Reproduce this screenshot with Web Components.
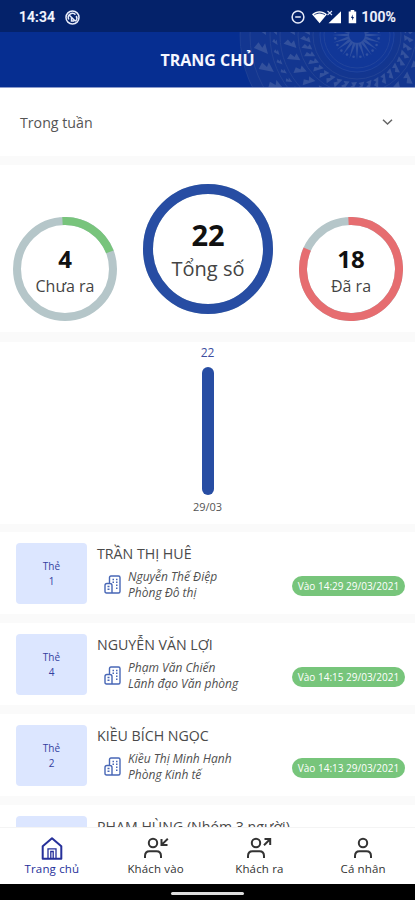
<!DOCTYPE html>
<html lang="vi">
<head>
<meta charset="utf-8">
<title>Trang chủ</title>
<style>
html,body{margin:0;padding:0}
body{width:415px;height:900px;overflow:hidden;background:#fafafa;font-family:"Open Sans","Noto Sans",sans-serif;color:#444}
</style>
</head>
<body>
<visitor-app></visitor-app>
<script>
const define = (name, render) => customElements.define(name, class extends HTMLElement {
  connectedCallback() {
    if (this.shadowRoot) return;
    const t = document.createElement('template');
    t.innerHTML = render(this);
    this.attachShadow({mode: 'open'}).append(t.content.cloneNode(true));
  }
});
const attr = (el, n) => el.getAttribute(n) || '';

define('status-bar', () => `
<style>
:host{display:flex;height:32px;background:#04226a;color:#f4f6ff;font:500 14px/32px Roboto,sans-serif;align-items:center;box-sizing:border-box;padding:2px 19px 0 19px}
.l{letter-spacing:.1px;-webkit-text-stroke:.2px}
svg{display:block}
.sp{flex:1}
</style>
<span class="l">14:34</span>
<svg style="margin-left:10px" width="15" height="15" viewBox="0 0 15 15" fill="none" stroke="#e8ecfa" stroke-width="1.5"><circle cx="7.5" cy="7.5" r="6.500"/><path d="M3.800 9.500A4.200 4.200 0 0 1 10.500 4.600M4.600 5.500L10.500 11.200M11.200 6a4 4 0 0 1-.6 5M6.500 7.500v3.600h2.500"/></svg>
<span class="sp"></span>
<svg width="14" height="14" viewBox="0 0 14 14" fill="none" stroke="#e8ecfa" stroke-width="1.5"><circle cx="7" cy="7" r="5.900"/><path d="M4.200 7h5.600"/></svg>
<svg style="margin-left:7px" width="30" height="15" viewBox="0 0 30 15" fill="#fff"><path d="M0 4.200C4.500 .300 10.500 .300 15 4.200L7.600 13.200z"/><path d="M2.300 4.800C5.500 2.600 9.500 2.600 12.900 4.800" fill="none" stroke="#04226a" stroke-width=".9"/><path d="M16.500 13.300H29V1.200z"/><path d="M15.500 1l4.500 4M20 1l-4.500 4" stroke="#dfe5f8" stroke-width="1.100"/></svg>
<svg style="margin:0 4px 0 6px" width="9" height="14" viewBox="0 0 9 14"><path d="M2.700 0h3.600v1.500H8.200V13.300H.700V1.500h2z" fill="#fff"/><path d="M4.700 4.500L3 8h1.200v2.500L6 7H4.700z" fill="#04226a"/></svg>
<span class="l">100%</span>`);

define('title-bar', () => {
  const polar = (r, a) => `${(118 + r * Math.cos(a)).toFixed(1)} ${(3 + r * Math.sin(a)).toFixed(1)}`;
  let d = '';
  // radial ornament: central star, tick rings and bird-like bands
  for (let i = 0; i < 20; i++) {
    const a = i * Math.PI / 10, [x, y] = polar(22, a + .157).split(' ');
    d += `<path d="M${polar(8, a - .2)}L${polar(25, a)}L${polar(8, a + .2)}z"/><circle cx="${x}" cy="${y}" r="1.300"/>`;
  }
  const band = (n, r, w, h) => {
    for (let i = 0; i < n; i++) {
      const a = i * 2 * Math.PI / n;
      d += `<path d="M${polar(r, a)}L${polar(r + h, a + w)}L${polar(r + h * .6, a + w * 1.6)}L${polar(r + h * .35, a + w * .9)}L${polar(r + h * .1, a + w * 1.400)}z"/>`;
    }
  };
  band(40, 47, .09, 10); band(30, 62, .09, 12); band(50, 80, .05, 5); band(30, 91, .085, 13);
  const rings = [33, 37, 44, 59, 77, 87, 107, 117].map(r => `<circle cx="118" cy="3" r="${r}"/>`).join('');
  return `
<style>
:host{display:grid;grid-template-columns:1fr;height:56px;background:#062e91;border-bottom:1px solid #8b9bcb;box-sizing:border-box;overflow:hidden}
svg,h1{grid-area:1/1}
svg{justify-self:end;display:block}
h1{margin:0;text-align:center;align-self:center;font-size:16px;line-height:20px;font-weight:700;color:#f5f7ff;z-index:1}
</style>
<svg width="176" height="55" viewBox="0 0 176 55"><circle cx="118" cy="3" r="117" fill="#56658f" opacity=".16"/><circle cx="118" cy="3" r="38" fill="#0c3cb0" opacity=".25"/><g fill="#7186b6" opacity=".34">${d}</g><g fill="none" stroke="#6c7fae" stroke-width="1" opacity=".18">${rings}</g></svg>
<h1><slot></slot></h1>`;
});

define('period-select', () => `
<style>
:host{display:flex;height:68px;background:#fff;align-items:center;justify-content:space-between;padding:0 22px 0 20px;box-sizing:border-box;font-size:14.200px;color:#555}
svg{display:block}
</style>
<span><slot></slot></span>
<svg width="11" height="8" viewBox="0 0 11 8" fill="none" stroke="#666" stroke-width="1.500"><path d="M1 1.700l4.500 4.300L10 1.700"/></svg>`);

define('stat-ring', el => {
  const s = +attr(el, 'size'), w = +attr(el, 'stroke'), r = (s - w) / 2, c = s / 2, L = 2 * Math.PI * r;
  const f = +attr(el, 'part');
  return `
<style>
:host{display:grid;width:${s}px;height:${s}px}
svg,div{grid-area:1/1}
div{display:flex;flex-direction:column;align-items:center;justify-content:center;z-index:1;white-space:nowrap;padding-top:3px}
b{font-weight:700;color:#111;font-size:${attr(el, 'num')}px;line-height:1.250}
span{color:#444;font-size:${attr(el, 'text')}px;line-height:1.500}
</style>
<svg width="${s}" height="${s}" fill="none" stroke-width="${w}"><circle cx="${c}" cy="${c}" r="${r}" stroke="#b5c6c9"/><circle cx="${c}" cy="${c}" r="${r}" stroke="${attr(el, 'color')}" stroke-dasharray="${L * f} ${L}" transform="rotate(${attr(el, 'from') || -90} ${c} ${c})"/></svg>
<div><b>${attr(el, 'value')}</b><span><slot></slot></span></div>`;
});

define('stat-row', () => `
<style>
:host{display:flex;height:167px;background:#fff;box-sizing:border-box;padding:19px 12px 0 13px;justify-content:space-between;align-items:flex-start}
::slotted([small]){margin-top:33px}
</style><slot></slot>`);

define('day-chart', () => `
<style>
:host{display:flex;flex-direction:column;align-items:center;height:182px;background:#fff;box-sizing:border-box;padding-top:3px}
b{font-size:12px;line-height:15px;font-weight:500;color:#3d4ea0}
i{width:12px;height:128px;border-radius:6px;background:#274da3;margin:7px 0 4px}
span{font-size:11px;line-height:15px;color:#555}
</style><b>22</b><i></i><span>29/03</span>`);

define('visit-card', el => `
<style>
:host{display:flex;height:82px;background:#fff;box-sizing:border-box;padding:11px 10px 0 16px}
.tile{width:71px;height:61px;border-radius:4px;background:#dce6ff;color:#3440a0;font-size:10px;line-height:14.500px;text-align:center;display:flex;flex-direction:column;justify-content:center;font-weight:500;flex:none}
.body{margin-left:10px;flex:1;min-width:0}
.name{font-size:14.200px;line-height:20px;color:#4a4a4a;white-space:nowrap;padding-top:1px}
.row{display:flex;align-items:center;margin-top:4px}
.who{font-size:12px;line-height:16px;font-style:italic;color:#505050;margin-left:7px;flex:1;white-space:nowrap;padding-top:1px}
svg{display:block;margin-left:7px;flex:none}
.pill{height:20px;border-radius:10px;background:#77c57b;color:#fff;font-size:10px;line-height:21px;width:113px;text-align:center;flex:none;white-space:nowrap;margin-top:2px}
</style>
<div class="tile">${attr(el, 'card') ? `<span>Thẻ</span><span>${attr(el, 'card')}</span>` : ''}</div>
<div class="body"><div class="name">${attr(el, 'name')}</div>
${attr(el, 'host') ? `<div class="row"><svg width="17" height="19" viewBox="0 0 17 19" fill="none" stroke="#4867b6" stroke-width="1.400"><path d="M5.500 8V2.500Q5.500 1 7 1H14.500Q16 1 16 2.500V16.500Q16 18 14.500 18H2.500Q1 18 1 16.500V10.500Q1 8.500 3 8.500H6Q8 8.500 8 10.500V18"/><path d="M8.500 4.500h1.500M12 4.500h1.500M8.500 7.300h1.500M12 7.300h1.500M12 10.300h1.500M12 13.300h1.500M3.500 11.500h2M3.500 14.300h2"/></svg>
<div class="who">${attr(el, 'host')}<br>${attr(el, 'dept')}</div><div class="pill">${attr(el, 'time')}</div></div>` : ''}</div>`);

const personAt = x => `<circle cx="${x}" cy="6" r="4.200"/><path d="M${x - 8} 21V19Q${x - 8} 14.200 ${x - 3.500} 14.200H${x + 3.500}Q${x + 8} 14.200 ${x + 8} 19V21"/>`;
const icons = {
  home: '<path d="M5.700 9.300L15 1.200l9.300 8.100V21.800H5.700z" stroke-linejoin="round"/><path d="M11 21.500V11.800h8v9.700M13.800 21.500V14.500h2.400v7" stroke-width="1.300"/>',
  in: personAt(12) + '<path d="M26.800 1.800L20.800 7.600M20.500 2v6h6"/>',
  out: personAt(12) + '<path d="M20 8.200L26 2.200M20.500 2H26.200V8"/>',
  user: personAt(15)
};
define('tab-item', el => `
<style>
:host{display:flex;flex-direction:column;align-items:center;width:103.750px;color:#333;font-size:11.500px;line-height:16px;padding-top:9px;box-sizing:border-box}
:host([active]){color:#26309a}
svg{display:block;margin-bottom:1px}
span{font-weight:500;white-space:nowrap;letter-spacing:.15px}
</style>
<svg width="30" height="23" viewBox="0 0 30 23" fill="none" stroke="currentColor" stroke-width="2">${icons[attr(el, 'icon')]}</svg><span><slot></slot></span>`);

define('tab-bar', () => `
<style>
:host{display:flex;height:57px;background:#fff;flex:none;border-top:1px solid #f4f4f4;box-sizing:border-box}
</style><slot></slot>`);

define('gesture-bar', () => `
<style>
:host{display:flex;height:16px;background:#000;justify-content:center;align-items:center;flex:none}
i{width:73px;height:3px;border-radius:2px;background:#ddd;margin-top:2px}
</style><i></i>`);

define('visitor-app', () => `
<style>
:host{display:flex;flex-direction:column;width:415px;height:900px;background:#fafafa}
main{flex:1;min-height:0;overflow:hidden}
stat-row{margin-top:9px}
day-chart{margin-top:10px}
visit-card{margin-top:9px}
day-chart + visit-card{margin-top:8px}
visit-card:last-child{margin-top:9px}
</style>
<status-bar></status-bar>
<title-bar>TRANG CHỦ</title-bar>
<main>
<period-select>Trong tuần</period-select>
<stat-row>
<stat-ring small size="104" stroke="8" num="24" text="16" value="4" part=".20" color="#78c47c" from="-93">Chưa ra</stat-ring>
<stat-ring size="130" stroke="10" num="29" text="20" value="22" part="1" color="#274da3">Tổng số</stat-ring>
<stat-ring small size="104" stroke="8" num="24" text="16" value="18" part=".825" color="#e66d70" from="-93">Đã ra</stat-ring>
</stat-row>
<day-chart></day-chart>
<visit-card card="1" name="TRẦN THỊ HUÊ" host="Nguyễn Thế Điệp" dept="Phòng Đô thị" time="Vào 14:29 29/03/2021"></visit-card>
<visit-card card="4" name="NGUYỄN VĂN LỢI" host="Phạm Văn Chiến" dept="Lãnh đạo Văn phòng" time="Vào 14:15 29/03/2021"></visit-card>
<visit-card card="2" name="KIỀU BÍCH NGỌC" host="Kiều Thị Minh Hạnh" dept="Phòng Kinh tế" time="Vào 14:13 29/03/2021"></visit-card>
<visit-card name="PHẠM HÙNG (Nhóm 3 người)"></visit-card>
</main>
<tab-bar>
<tab-item active icon="home">Trang chủ</tab-item>
<tab-item icon="in">Khách vào</tab-item>
<tab-item icon="out">Khách ra</tab-item>
<tab-item icon="user">Cá nhân</tab-item>
</tab-bar>
<gesture-bar></gesture-bar>`);
</script>
</body>
</html>
